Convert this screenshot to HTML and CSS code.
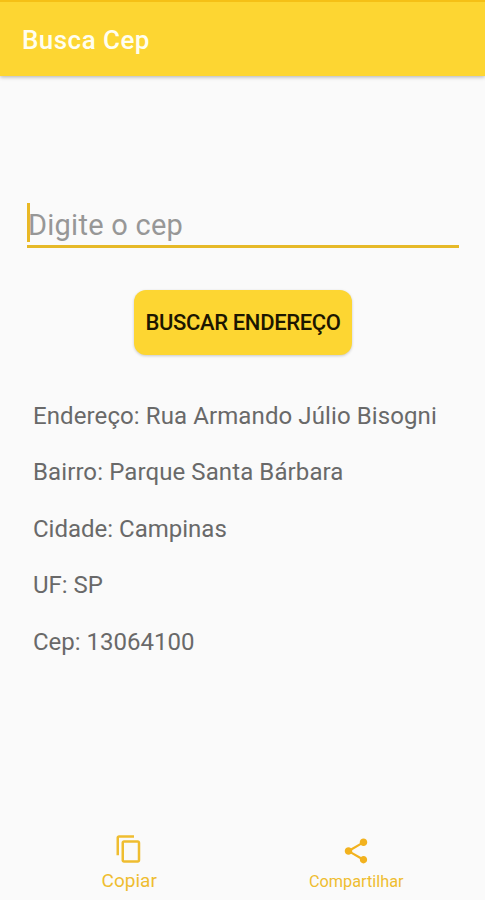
FILE: index.html
```html
<!DOCTYPE html>
<html lang="pt-BR">
<head>
<meta charset="utf-8">
<title>Busca Cep</title>
<link rel="stylesheet" href="styles.css">
</head>
<body>
<header class="app-bar"><h1 class="app-title">Busca Cep</h1></header>
<main class="content">
  <div class="field"><span class="caret"></span><span class="hint">Digite o cep</span></div>
  <button class="search" type="button">BUSCAR ENDEREÇO</button>
  <div class="results">
    <p class="wide">Endereço: Rua Armando Júlio Bisogni</p>
    <p class="wide">Bairro: Parque Santa Bárbara</p>
    <p>Cidade: Campinas</p>
    <p>UF: SP</p>
    <p>Cep: 13064100</p>
  </div>
</main>
<nav class="bottom-nav">
  <a class="nav-item copy">
    <svg class="icon" viewBox="0 0 24 24"><path d="M16 1H4c-1.100 0-2 .9-2 2v14h2V3h12V1zm3 4H8c-1.100 0-2 .9-2 2v14c0 1.100.9 2 2 2h11c1.100 0 2-.9 2-2V7c0-1.100-.9-2-2-2zm0 16H8V7h11v14z"/></svg>
    <span class="nav-label">Copiar</span>
  </a>
  <a class="nav-item share">
    <svg class="icon" viewBox="0 0 24 24"><path d="M18 16.080c-.76 0-1.440.3-1.960.77L8.910 12.700c.05-.23.090-.46.090-.7s-.04-.47-.09-.7l7.050-4.110c.54.5 1.250.81 2.040.81 1.660 0 3-1.340 3-3s-1.340-3-3-3-3 1.340-3 3c0 .24.040.47.090.7L8.040 9.810C7.500 9.310 6.790 9 6 9c-1.660 0-3 1.340-3 3s1.340 3 3 3c.79 0 1.500-.31 2.040-.81l7.120 4.160c-.05.21-.08.43-.08.65 0 1.610 1.310 2.920 2.920 2.920s2.920-1.310 2.920-2.920-1.310-2.920-2.920-2.920z"/></svg>
    <span class="nav-label">Compartilhar</span>
  </a>
</nav>
</body>
</html>
```
FILE: styles.css
```css
* { box-sizing: border-box; }
body {
  margin: 0;
  height: 900px;
  display: flex;
  flex-direction: column;
  overflow: hidden;
  background: #fafafa;
  font-family: Roboto, "Liberation Sans", sans-serif;
}
.app-bar {
  height: 76px;
  flex: none;
  padding: 2px 22px 0;
  display: flex;
  align-items: center;
  background: #fdd632;
  border-top: 2px solid #f5c016;
  box-shadow: 0 1px 4px rgba(0, 0, 0, .3);
}
.app-title {
  margin: 0;
  font-size: 26px;
  font-weight: 500;
  line-height: 30px;
  letter-spacing: .45px;
  color: #fffef0;
}
.content {
  flex: 1;
  display: flex;
  flex-direction: column;
  padding: 127px 26px 0 27px;
}
.field {
  height: 45px;
  display: flex;
  border-bottom: 3px solid #e6b928;
}
.caret {
  width: 3px;
  height: 39px;
  margin-right: -2px;
  background: #e9b824;
}
.hint {
  font-size: 29px;
  line-height: 44px;
  letter-spacing: .25px;
  color: #979797;
}
.search {
  align-self: center;
  width: 218px;
  height: 65px;
  margin: 42px 0 0 0;
  padding: 1px 0 0;
  border: 0;
  border-radius: 12px;
  background: #fdd632;
  box-shadow: 0 1px 3px rgba(0, 0, 0, .2);
  font: 500 22px/64px Roboto, "Liberation Sans", sans-serif;
  letter-spacing: -.35px;
  color: #1c1600;
  white-space: nowrap;
}
.results {
  margin: 47px 0 0 6px;
  display: flex;
  flex-direction: column;
  gap: 28.4px;
}
.results p {
  margin: 0;
  font-size: 24px;
  line-height: 28px;
  color: #696969;
  white-space: nowrap;
}
.results .wide { letter-spacing: .1px; }
.bottom-nav {
  height: 68px;
  display: flex;
  padding: 0 15px;
  color: #efbd30;
}
.nav-item {
  flex: 1;
  display: flex;
  flex-direction: column;
  align-items: center;
}
.icon {
  width: 30px;
  height: 30px;
  fill: currentColor;
}
.copy { padding-top: 2px; }
.share { padding-top: 4px; }
.share .icon { fill: #f2b21e; }
.copy .nav-label {
  margin: 4px 0 0 1px;
  font-size: 19px;
  line-height: 25px;
}
.share .nav-label {
  margin-top: 4px;
  font-size: 16.300px;
  line-height: 23px;
}
```
